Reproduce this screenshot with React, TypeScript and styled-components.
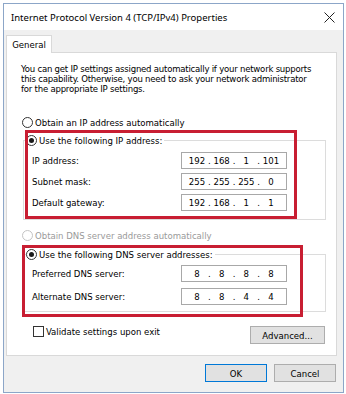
import React from "react";
import styled, { createGlobalStyle } from "styled-components";

const GlobalStyle = createGlobalStyle`
  html, body {
    margin: 0;
    padding: 0;
    background: #ffffff;
  }
  body {
    font-family: "DejaVu Sans Condensed", "DejaVu Sans", sans-serif;
    font-stretch: condensed;
    font-size: 9.5px;
    color: #000;
  }
`;

const Window = styled.div`
  margin: 3px 0 0 3px;
  width: 339px;
  height: 388px;
  border: 1px solid #8ca6c8;
  background: #f0f0f0;
  display: flex;
  flex-direction: column;
`;

const TitleBar = styled.div`
  height: 26px;
  flex: none;
  background: #ffffff;
  display: flex;
  align-items: center;
  justify-content: space-between;
  padding: 0 8px 0 7px;
  font-family: "Noto Sans", "Open Sans", sans-serif;
  font-stretch: normal;
  font-size: 9.5px;
`;

const Body = styled.div`
  flex: 1;
  display: flex;
  flex-direction: column;
  padding: 5px 6px 0 2px;
`;

const TabStrip = styled.div`
  display: flex;
  height: 17px;
`;

const Tab = styled.div`
  width: 46px;
  height: 18px;
  box-sizing: border-box;
  background: #ffffff;
  border: 1px solid #d9d9d9;
  border-bottom: none;
  display: flex;
  align-items: center;
  justify-content: center;
  position: relative;
  z-index: 1;
`;

const Panel = styled.div`
  position: relative;
  height: 302px;
  background: #ffffff;
  border: 1px solid #d9d9d9;
  padding: 0 11px 0 14px;
  display: flex;
  flex-direction: column;
`;

const Intro = styled.p`
  margin: 11px 0 0;
  line-height: 10px;
  white-space: nowrap;
  letter-spacing: -0.22px;
`;

const RadioRow = styled.label<{ $disabled?: boolean }>`
  display: flex;
  align-items: center;
  gap: 2px;
  height: 12px;
  white-space: nowrap;
  color: ${(p) => (p.$disabled ? "#9a9a9a" : "#000")};
`;

const RadioDot = styled.span<{ $checked?: boolean; $disabled?: boolean }>`
  width: 11px;
  height: 11px;
  box-sizing: border-box;
  border-radius: 50%;
  border: 1px solid ${(p) => (p.$disabled ? "#c4c4c4" : "#333")};
  background: #fff;
  display: flex;
  align-items: center;
  justify-content: center;

  &::after {
    content: "";
    width: 5px;
    height: 5px;
    border-radius: 50%;
    background: #1a1a1a;
    display: ${(p) => (p.$checked ? "block" : "none")};
  }
`;

const StandaloneRadio = styled.div<{ $top: number }>`
  margin: ${(p) => p.$top}px 0 0 1px;
`;

const GroupBox = styled.fieldset<{ $top: number; $gap: number; $padTop: number; $padBottom: number }>`
  box-sizing: border-box;
  margin: ${(p) => p.$top}px 0 0 2px;
  width: 303px;
  border: 1px solid #dcdcdc;
  padding: ${(p) => p.$padTop}px 38px ${(p) => p.$padBottom}px 8px;
  display: flex;
  flex-direction: column;
  gap: ${(p) => p.$gap}px;
  min-inline-size: 0;
`;

const Legend = styled.legend`
  margin-left: -6px;
  padding: 0 2px 0 0;
`;

const FieldRow = styled.div`
  display: flex;
  align-items: center;
  justify-content: space-between;
  height: 17px;
  white-space: nowrap;
`;

const IpBox = styled.div`
  width: 106px;
  height: 17px;
  box-sizing: border-box;
  border: 1px solid #a8a8a8;
  display: grid;
  grid-template-columns: 1fr auto 1fr auto 1fr auto 1fr;
  align-items: center;
  padding: 0 4px;
  text-align: center;
`;

const BottomRow = styled.div`
  margin-top: 14px;
  display: flex;
  justify-content: space-between;
  align-items: flex-start;
  padding-left: 12px;
`;

const CheckRow = styled.label`
  display: flex;
  align-items: center;
  gap: 2px;
  height: 11px;
  white-space: nowrap;
`;

const CheckBox = styled.span`
  width: 11px;
  height: 11px;
  box-sizing: border-box;
  border: 1px solid #333;
  background: #fff;
`;

const Button = styled.button<{ $width: number; $focused?: boolean }>`
  width: ${(p) => p.$width}px;
  height: 18px;
  margin: 0;
  padding: 0;
  background: #e1e1e1;
  border: 1px solid ${(p) => (p.$focused ? "#0078d7" : "#adadad")};
  font: inherit;
  color: #000;
`;

const ButtonRow = styled.div`
  margin-top: 8px;
  display: flex;
  justify-content: flex-end;
  gap: 7px;
  padding-right: 1px;
`;

const RedBox = styled.div<{ $left: number; $top: number; $w: number; $h: number }>`
  position: absolute;
  left: ${(p) => p.$left}px;
  top: ${(p) => p.$top}px;
  width: ${(p) => p.$w}px;
  height: ${(p) => p.$h}px;
  box-sizing: border-box;
  border: 3px solid #c81e32;
  pointer-events: none;
`;

const Radio = ({
  label,
  checked,
  disabled,
}: {
  label: string;
  checked?: boolean;
  disabled?: boolean;
}) => (
  <RadioRow $disabled={disabled}>
    <RadioDot $checked={checked} $disabled={disabled} />
    {label}
  </RadioRow>
);

const IpField = ({ value }: { value: string }) => {
  const parts = value.split(".");
  return (
    <IpBox>
      {parts.map((part, i) => (
        <React.Fragment key={i}>
          <span>{part}</span>
          {i < parts.length - 1 && <span>.</span>}
        </React.Fragment>
      ))}
    </IpBox>
  );
};

const ipRows = [
  { label: "IP address:", value: "192.168.1.101" },
  { label: "Subnet mask:", value: "255.255.255.0" },
  { label: "Default gateway:", value: "192.168.1.1" },
];

const dnsRows = [
  { label: "Preferred DNS server:", value: "8.8.8.8" },
  { label: "Alternate DNS server:", value: "8.8.4.4" },
];

const CloseIcon = () => (
  <svg width="11" height="11" viewBox="0 0 11 11">
    <path d="M0.5 0.5 L10.5 10.5 M10.5 0.5 L0.5 10.5" stroke="#222" strokeWidth="1" />
  </svg>
);

export default function App() {
  return (
    <>
      <GlobalStyle />
      <Window>
        <TitleBar>
          <span>Internet Protocol Version 4 (TCP/IPv4) Properties</span>
          <CloseIcon />
        </TitleBar>
        <Body>
          <TabStrip>
            <Tab>General</Tab>
          </TabStrip>
          <Panel>
            <Intro>
              You can get IP settings assigned automatically if your network supports
              <br />
              this capability. Otherwise, you need to ask your network administrator
              <br />
              for the appropriate IP settings.
            </Intro>

            <StandaloneRadio $top={22}>
              <Radio label="Obtain an IP address automatically" />
            </StandaloneRadio>

            <GroupBox $top={6} $gap={4} $padTop={6} $padBottom={8}>
              <Legend>
                <Radio label="Use the following IP address:" checked />
              </Legend>
              {ipRows.map((row) => (
                <FieldRow key={row.label}>
                  <span>{row.label}</span>
                  <IpField value={row.value} />
                </FieldRow>
              ))}
            </GroupBox>

            <StandaloneRadio $top={9}>
              <Radio label="Obtain DNS server address automatically" disabled />
            </StandaloneRadio>

            <GroupBox $top={7} $gap={6} $padTop={5} $padBottom={6}>
              <Legend>
                <Radio label="Use the following DNS server addresses:" checked />
              </Legend>
              {dnsRows.map((row) => (
                <FieldRow key={row.label}>
                  <span>{row.label}</span>
                  <IpField value={row.value} />
                </FieldRow>
              ))}
            </GroupBox>

            <BottomRow>
              <CheckRow>
                <CheckBox />
                Validate settings upon exit
              </CheckRow>
              <Button $width={75}>Advanced...</Button>
            </BottomRow>

            <RedBox $left={18} $top={77} $w={272} $h={89} />
            <RedBox $left={15} $top={192} $w={281} $h={72} />
          </Panel>
          <ButtonRow>
            <Button $width={62} $focused>
              OK
            </Button>
            <Button $width={62}>Cancel</Button>
          </ButtonRow>
        </Body>
      </Window>
    </>
  );
}
